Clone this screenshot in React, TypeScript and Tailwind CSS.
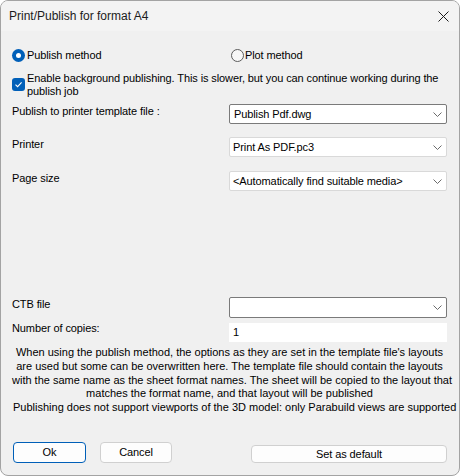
import React from "react";

function Chevron() {
  return (
    <svg width="9" height="5" viewBox="0 0 9 5" className="shrink-0">
      <path d="M0.5 0.5 L4.5 4.5 L8.5 0.5" stroke="#6b6b6b" strokeWidth="1" fill="none" />
    </svg>
  );
}

function Combo({ value, active, h = "h-[20px]", pl = "pl-[3px]" }: { value: string; active?: boolean; h?: string; pl?: string }) {
  return (
    <div
      className={`flex ${h} w-[218px] items-center justify-between rounded-[2px] border bg-white pr-[4px] ${pl} ${
        active ? "border-[#7a7a7a]" : "border-[#d9d9d9]"
      }`}
    >
      <span className="whitespace-nowrap">{value}</span>
      <Chevron />
    </div>
  );
}

function Row({ label, children, className = "" }: { label: string; children: React.ReactNode; className?: string }) {
  return (
    <div className={`flex items-start justify-between ${className}`}>
      <span className="leading-[14px] whitespace-nowrap">{label}</span>
      {children}
    </div>
  );
}

export default function App() {
  return (
    <div className="h-[476px] w-[460px] font-['Liberation_Sans',Arial,sans-serif] text-[11px] tracking-[-0.1px] text-black">
      <div className="flex h-full w-full flex-col overflow-hidden rounded-[8px] border border-[#a3a3a3] bg-[#f0f0f0]">
        {/* title bar */}
        <div className="flex h-[30px] shrink-0 items-center justify-between bg-[#f3f3f3] pl-[8px] pr-[10px]">
          <span className="text-[12px] tracking-normal text-[#1b1b1b]">Print/Publish for format A4</span>
          <svg width="11" height="11" viewBox="0 0 11 11">
            <path d="M0.5 0.5 L10.5 10.5 M10.5 0.5 L0.5 10.5" stroke="#1b1b1b" strokeWidth="1" />
          </svg>
        </div>

        <div className="flex flex-1 flex-col pl-[11px] pr-[12px]">
          {/* method choice */}
          <div className="mt-[18px] flex h-[13px] items-center">
            <div className="flex w-[219px] items-center gap-[2px]">
              <span className="flex h-[13px] w-[13px] items-center justify-center rounded-full bg-[#005fb8]">
                <span className="h-[5px] w-[5px] rounded-full bg-white" />
              </span>
              <span className="leading-[13px]">Publish method</span>
            </div>
            <div className="flex items-center gap-[1px]">
              <span className="h-[13px] w-[13px] rounded-full border border-[#5c5c5c] bg-[#f7f7f7]" />
              <span className="leading-[13px]">Plot method</span>
            </div>
          </div>

          {/* background publishing */}
          <div className="mt-[10px] flex items-center gap-[2px]">
            <span className="flex h-[13px] w-[13px] shrink-0 items-center justify-center rounded-[3px] bg-[#005fb8]">
              <svg width="9" height="9" viewBox="0 0 9 9">
                <path d="M1.5 4.6 L3.6 6.7 L7.6 2.4" stroke="white" strokeWidth="1.1" fill="none" />
              </svg>
            </span>
            <span className="whitespace-nowrap leading-[12.5px]">
              Enable background publishing. This is slower, but you can continue working during the
              <br />
              publish job
            </span>
          </div>

          <Row label="Publish to printer template file :" className="mt-[7px]">
            <Combo value="Publish Pdf.dwg" active pl="pl-[4px]" />
          </Row>
          <Row label="Printer" className="mt-[13px]">
            <Combo value="Print As PDF.pc3" />
          </Row>
          <Row label="Page size" className="mt-[14px]">
            <Combo value="<Automatically find suitable media>" />
          </Row>

          <Row label="CTB file" className="mt-[106px]">
            <Combo value="" active h="h-[21px]" />
          </Row>
          <div className="mt-[5px] flex items-start justify-between">
            <span className="leading-[11px] whitespace-nowrap">Number of copies:</span>
            <div className="flex h-[19px] w-[218px] items-center bg-white pl-[4px]">1</div>
          </div>

          {/* notes */}
          <div className="mt-[4px] flex flex-col leading-[13.75px] tracking-normal">
            <div className="text-center whitespace-nowrap">
              When using the publish method, the options as they are set in the template file's layouts
              <br />
              are used but some can be overwritten here. The template file should contain the layouts
              <br />
              with the same name as the sheet format names. The sheet will be copied to the layout that
              <br />
              matches the format name, and that layout will be published
            </div>
            <div className="ml-[1px] whitespace-nowrap">
              Publishing does not support viewports of the 3D model: only Parabuild views are supported
            </div>
          </div>

          {/* buttons */}
          <div className="mt-[27px] flex items-end">
            <button className="ml-[1px] h-[21px] w-[73px] rounded-[4px] border border-[#005fb8] bg-[#fdfdfd]">Ok</button>
            <button className="ml-[14px] h-[21px] w-[72px] rounded-[4px] border border-[#d0d0d0] bg-[#fdfdfd]">Cancel</button>
            <button className="ml-auto h-[18px] w-[196px] rounded-[4px] border border-[#d0d0d0] bg-[#fdfdfd]">
              Set as default
            </button>
          </div>
        </div>
      </div>
    </div>
  );
}
